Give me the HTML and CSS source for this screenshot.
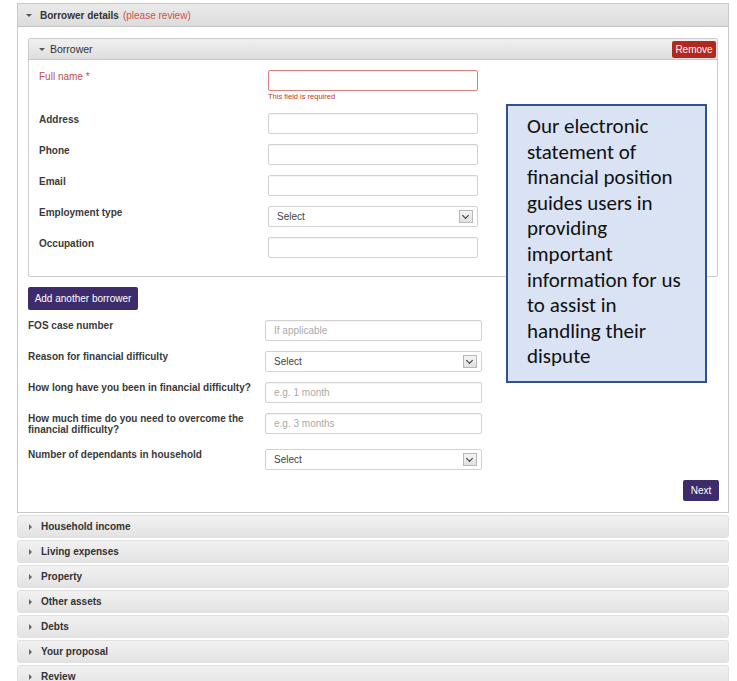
FILE: index.html
```html
<!DOCTYPE html>
<html lang="en">
<head>
<meta charset="utf-8">
<title>Statement of financial position</title>
<link rel="stylesheet" href="styles.css">
</head>
<body>
<div class="page">

  <section class="panel">
    <div class="panel-head">
      <span class="caret caret-down"></span>
      <span class="head-title">Borrower details</span>
      <span class="head-note">(please review)</span>
    </div>

    <div class="panel-body">
      <div class="sub-panel">
        <div class="sub-head">
          <span class="caret caret-down"></span>
          <span class="sub-title">Borrower</span>
          <button class="btn btn-remove" type="button">Remove</button>
        </div>
        <div class="sub-body">
          <div class="field field-narrow has-error">
            <label class="field-label">Full name *</label>
            <div class="control">
              <input class="input" type="text">
              <div class="field-msg">This field is required</div>
            </div>
          </div>
          <div class="field field-narrow">
            <label class="field-label">Address</label>
            <div class="control"><input class="input" type="text"></div>
          </div>
          <div class="field field-narrow">
            <label class="field-label">Phone</label>
            <div class="control"><input class="input" type="text"></div>
          </div>
          <div class="field field-narrow">
            <label class="field-label">Email</label>
            <div class="control"><input class="input" type="text"></div>
          </div>
          <div class="field field-narrow">
            <label class="field-label">Employment type</label>
            <div class="control">
              <div class="select"><span>Select</span><span class="select-arrow"></span></div>
            </div>
          </div>
          <div class="field field-narrow">
            <label class="field-label">Occupation</label>
            <div class="control"><input class="input" type="text"></div>
          </div>
        </div>
      </div>

      <button class="btn btn-purple btn-add" type="button">Add another borrower</button>

      <div class="fields-wide">
        <div class="field field-wide">
          <label class="field-label">FOS case number</label>
          <div class="control"><input class="input" type="text" placeholder="If applicable"></div>
        </div>
        <div class="field field-wide">
          <label class="field-label">Reason for financial difficulty</label>
          <div class="control">
            <div class="select"><span>Select</span><span class="select-arrow"></span></div>
          </div>
        </div>
        <div class="field field-wide">
          <label class="field-label">How long have you been in financial difficulty?</label>
          <div class="control"><input class="input" type="text" placeholder="e.g. 1 month"></div>
        </div>
        <div class="field field-wide">
          <label class="field-label">How much time do you need to overcome the financial difficulty?</label>
          <div class="control"><input class="input" type="text" placeholder="e.g. 3 months"></div>
        </div>
        <div class="field field-wide">
          <label class="field-label">Number of dependants in household</label>
          <div class="control">
            <div class="select"><span>Select</span><span class="select-arrow"></span></div>
          </div>
        </div>
      </div>

      <div class="actions">
        <button class="btn btn-purple btn-next" type="button">Next</button>
      </div>
    </div>
  </section>

  <div class="steps">
    <div class="step"><span class="caret caret-right"></span>Household income</div>
    <div class="step"><span class="caret caret-right"></span>Living expenses</div>
    <div class="step"><span class="caret caret-right"></span>Property</div>
    <div class="step"><span class="caret caret-right"></span>Other assets</div>
    <div class="step"><span class="caret caret-right"></span>Debts</div>
    <div class="step"><span class="caret caret-right"></span>Your proposal</div>
    <div class="step"><span class="caret caret-right"></span>Review</div>
  </div>

  <aside class="callout">
    Our electronic<br>
    statement of<br>
    financial position<br>
    guides users in<br>
    providing<br>
    important<br>
    information for us<br>
    to assist in<br>
    handling their<br>
    dispute
  </aside>

</div>
</body>
</html>
```

FILE: styles.css
```css
* {
  box-sizing: border-box;
}

html, body {
  margin: 0;
  padding: 0;
  background: #ffffff;
}

body {
  font-family: "Liberation Sans", Arial, sans-serif;
  font-size: 10px;
  color: #333333;
}

.page {
  position: relative;
  padding: 3px 0 0 17px;
}

/* ---------- outer accordion panel ---------- */

.panel {
  width: 712px;
  border: 1px solid #c9c9c9;
  background: #ffffff;
}

.panel-head {
  display: flex;
  align-items: center;
  height: 23px;
  padding-left: 8px;
  background: linear-gradient(#eaeaea, #dcdcdc);
  border-bottom: 1px solid #c4c4c4;
}

.head-title {
  font-weight: bold;
  color: #333333;
  margin-left: 8px;
}

.head-note {
  margin-left: 4px;
  color: #d0504a;
}

.caret {
  display: inline-block;
  width: 0;
  height: 0;
  flex: none;
}

.caret-down {
  border-left: 3px solid transparent;
  border-right: 3px solid transparent;
  border-top: 3px solid #555555;
}

.caret-right {
  border-top: 3px solid transparent;
  border-bottom: 3px solid transparent;
  border-left: 3px solid #666666;
  margin-right: 9px;
}

.panel-body {
  padding: 11px 10px 11px 10px;
}

/* ---------- borrower sub panel ---------- */

.sub-panel {
  border: 1px solid #cccccc;
  border-radius: 2px;
}

.sub-head {
  display: flex;
  align-items: center;
  height: 21px;
  padding: 0 1px 0 10px;
  background: linear-gradient(#f0f0f0, #dedede);
  border-bottom: 1px solid #c8c8c8;
}

.sub-title {
  margin-left: 5px;
  font-size: 10.5px;
  color: #333333;
}

.btn {
  border: 0;
  font-family: "Liberation Sans", Arial, sans-serif;
  font-size: 10px;
  color: #ffffff;
  cursor: pointer;
  padding: 0;
}

.btn-remove {
  margin-left: auto;
  width: 44px;
  height: 17px;
  background: #b3291f;
  border-radius: 2px;
}

.sub-body {
  display: flex;
  flex-direction: column;
  gap: 10px;
  padding: 10px 10px 18px 10px;
}

/* ---------- form rows ---------- */

.field {
  display: flex;
  align-items: flex-start;
}

.field-label {
  flex: none;
  font-weight: bold;
  line-height: 11px;
  padding-top: 1px;
  padding-bottom: 4px;
  color: #3a3a3a;
}

.field-narrow .field-label {
  width: 229px;
}

.field-narrow .control {
  width: 210px;
}

.field-wide .field-label {
  width: 237px;
  padding-top: 0;
}

.field-wide .control {
  width: 217px;
}

.input {
  display: block;
  width: 100%;
  height: 21px;
  margin: 0;
  padding: 0 8px;
  border: 1px solid #d2d2d2;
  border-radius: 2px;
  box-shadow: inset 0 1px 1px rgba(0, 0, 0, 0.05);
  font-family: "Liberation Sans", Arial, sans-serif;
  font-size: 10px;
  color: #444444;
  background: #ffffff;
  outline: none;
}

.input::placeholder {
  color: #aaaaaa;
}

.has-error .field-label {
  color: #c0504d;
  font-weight: normal;
}

.has-error .input {
  border-color: #d9807c;
}

.field-msg {
  font-size: 7.5px;
  line-height: 12px;
  color: #c0392b;
}

.select {
  display: flex;
  align-items: center;
  justify-content: space-between;
  height: 21px;
  padding: 0 4px 0 8px;
  border: 1px solid #d2d2d2;
  border-radius: 2px;
  font-size: 10px;
  color: #444444;
  background: #ffffff;
}

.select-arrow {
  position: relative;
  width: 14px;
  height: 13px;
  border: 1px solid #b8b8b8;
  background: linear-gradient(#f4f4f4, #e0e0e0);
}

.select-arrow::after {
  content: "";
  position: absolute;
  left: 3px;
  top: 2px;
  width: 4px;
  height: 4px;
  border-right: 1.5px solid #333333;
  border-bottom: 1.5px solid #333333;
  transform: rotate(45deg);
}

/* ---------- lower block ---------- */

.btn-add {
  display: block;
  margin-top: 10px;
  width: 110px;
  height: 23px;
  border-radius: 2px;
}

.btn-purple {
  background: #3d2b6c;
}

.fields-wide {
  display: flex;
  flex-direction: column;
  gap: 10px;
  margin-top: 10px;
}

.actions {
  display: flex;
  justify-content: flex-end;
  margin-top: 10px;
}

.btn-next {
  width: 36px;
  height: 21px;
  border-radius: 2px;
  margin-right: -1px;
}

/* ---------- collapsed steps ---------- */

.steps {
  display: flex;
  flex-direction: column;
  gap: 2px;
  margin-top: 2px;
  width: 712px;
}

.step {
  display: flex;
  align-items: center;
  height: 23px;
  padding-left: 11px;
  border: 1px solid #e0e0e0;
  border-radius: 3px;
  background: linear-gradient(#f1f1f1, #e3e3e3);
  font-weight: bold;
  color: #333333;
}

/* ---------- note overlay ---------- */

.callout {
  position: absolute;
  left: 506px;
  top: 104px;
  width: 201px;
  height: 279px;
  padding: 8px 0 0 19px;
  border: 2px solid #2f528f;
  background: #dae3f3;
  font-family: "Carlito", "Lato", sans-serif;
  font-size: 21px;
  line-height: 25.6px;
  color: #111111;
  white-space: nowrap;
}
```
